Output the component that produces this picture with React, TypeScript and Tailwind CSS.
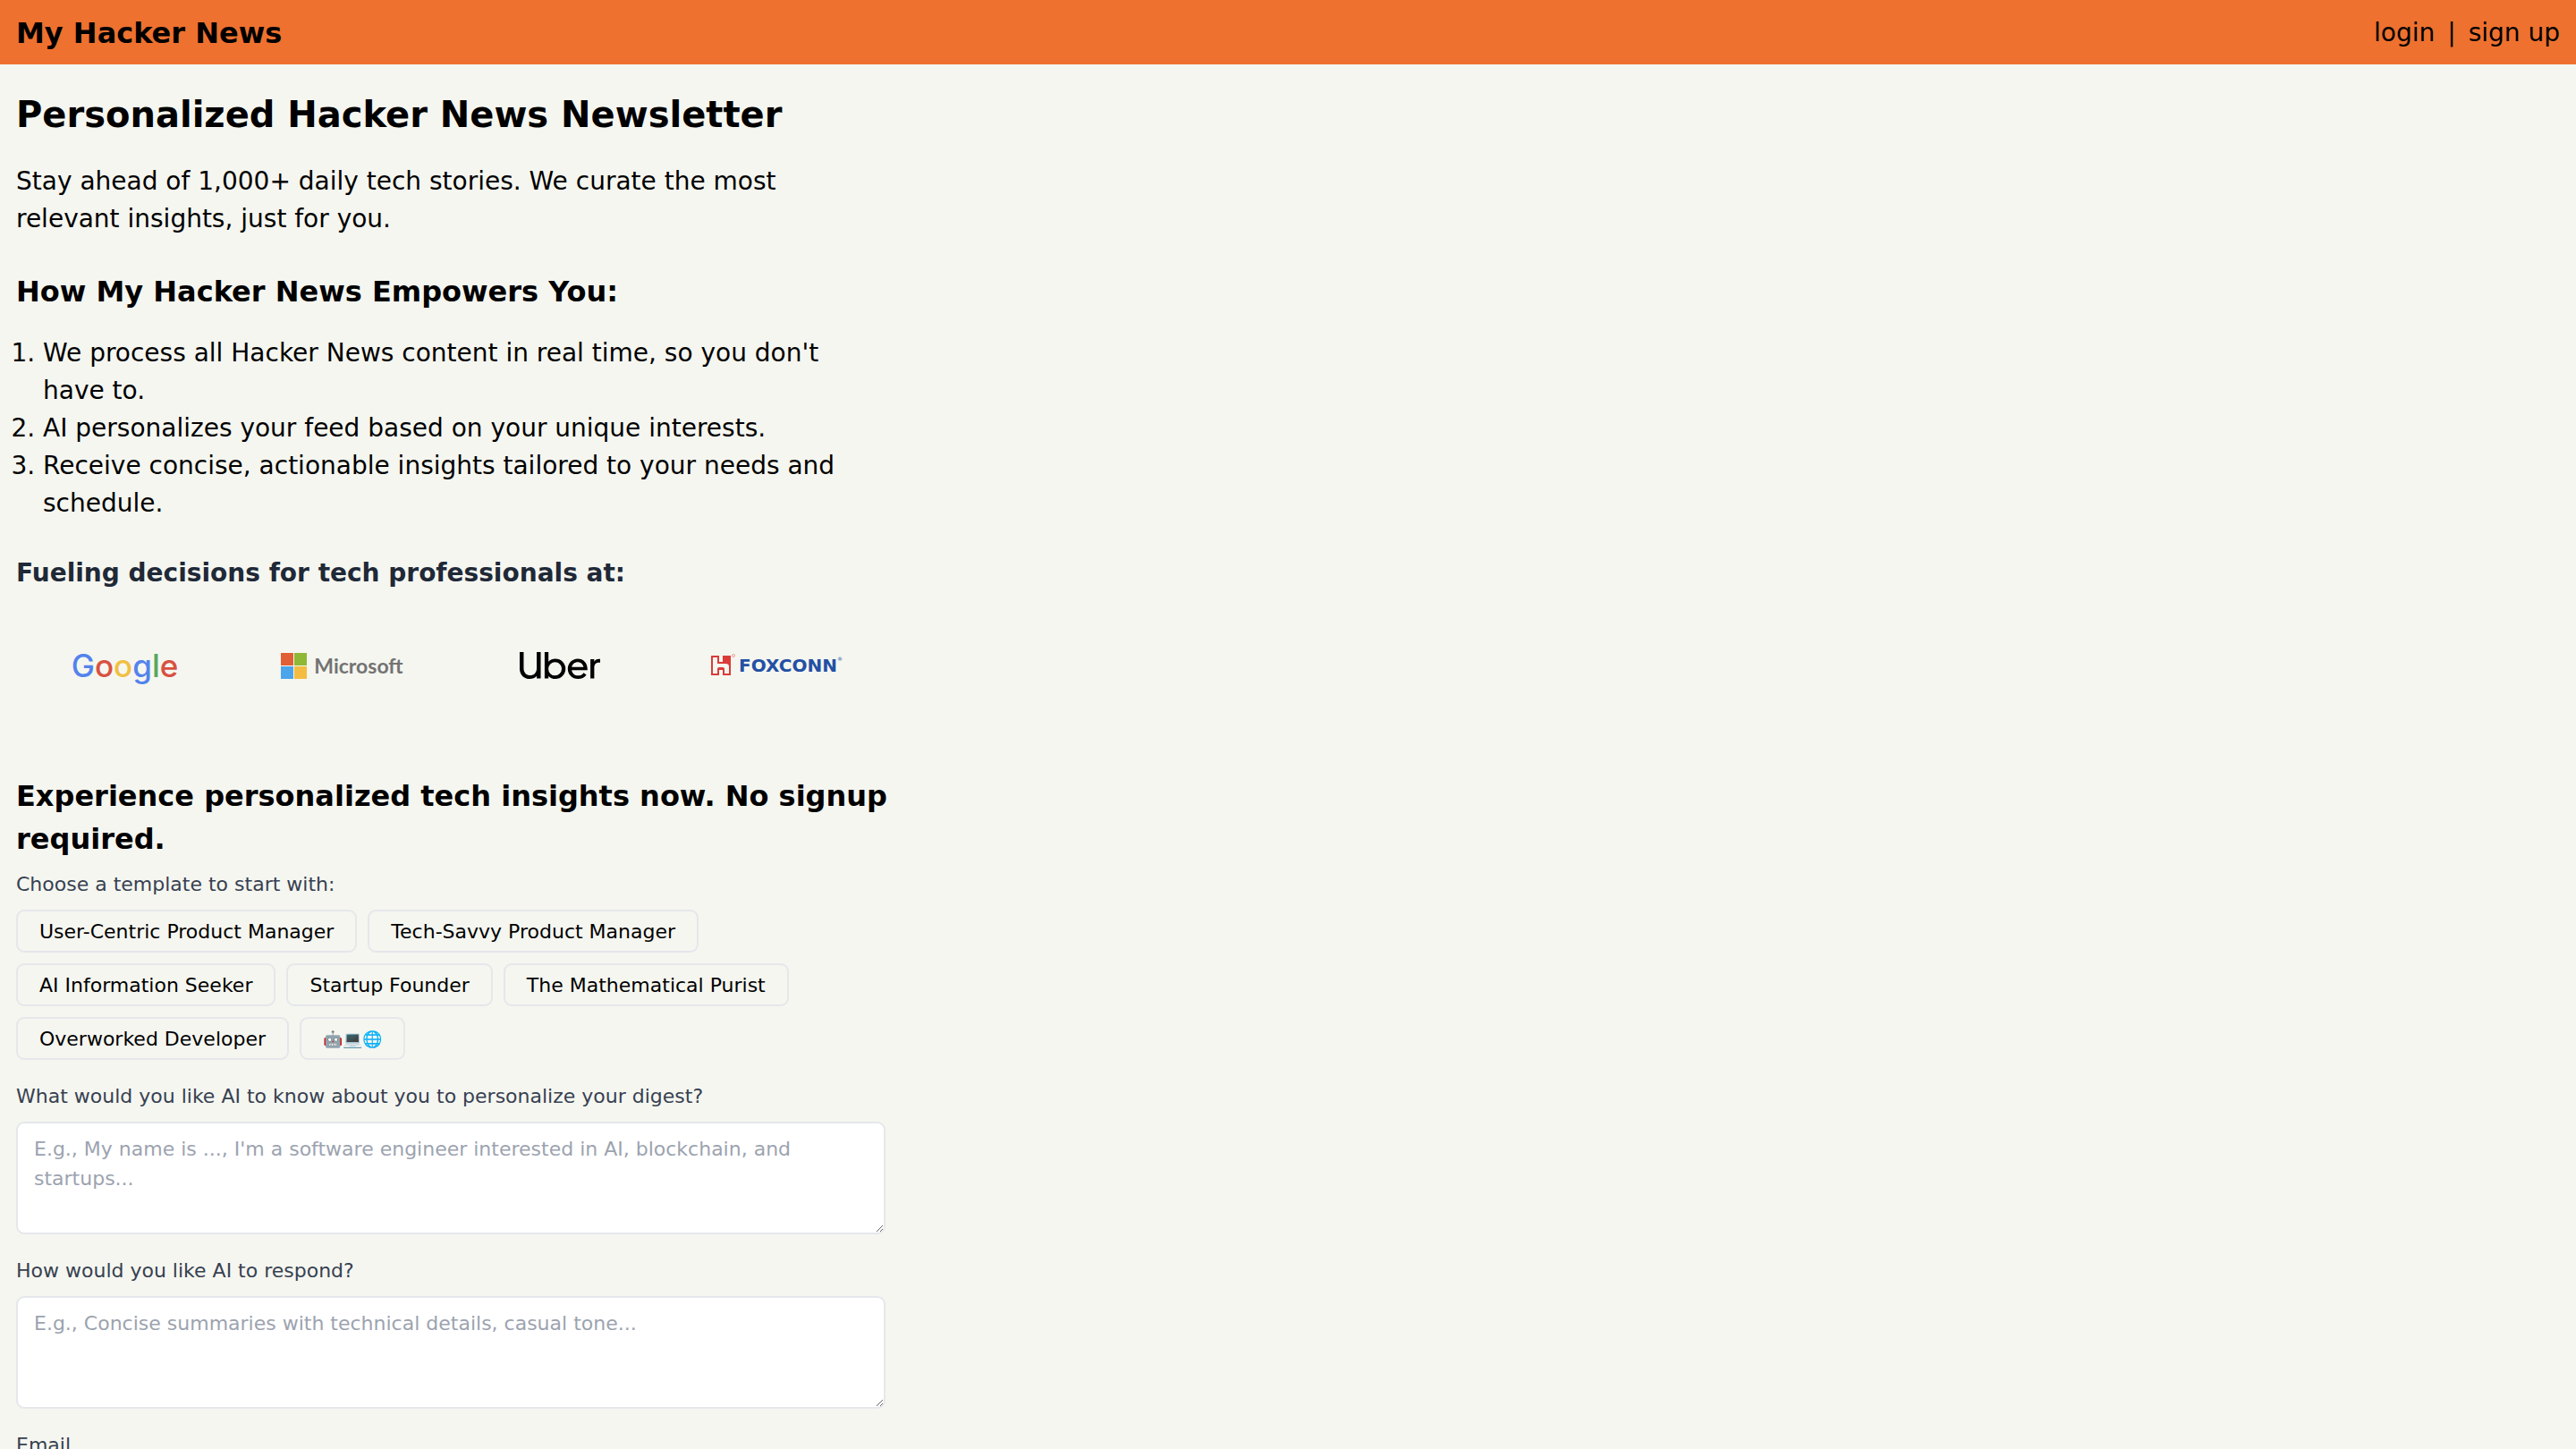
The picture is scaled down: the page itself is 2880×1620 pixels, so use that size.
import { useState } from 'react'
import { SiUber } from 'react-icons/si'

const BENEFITS = [
  "We process all Hacker News content in real time, so you don't have to.",
  'AI personalizes your feed based on your unique interests.',
  'Receive concise, actionable insights tailored to your needs and schedule.',
]

const TEMPLATES = [
  'User-Centric Product Manager',
  'Tech-Savvy Product Manager',
  'AI Information Seeker',
  'Startup Founder',
  'The Mathematical Purist',
  'Overworked Developer',
]

const EMOJI_TEMPLATE = '🤖💻🌐'

const CHIP = 'h-12 rounded-[9px] border-2 border-[#e5e7eb] px-6 leading-[33px]'
const FIELD =
  'block w-full h-[126px] rounded-[9px] border-2 border-[#e5e7eb] bg-white px-[18px] py-3 text-[22px] leading-[33px] text-black placeholder:text-[#9ca3af] resize'
const LABEL = 'block mb-3 text-[22px] leading-[33px] text-[#374151]'

function GoogleLogo() {
  return (
    <span className="font-[Inter,sans-serif] text-[35px] font-medium leading-none" aria-label="Google">
      <span className="text-[#5383ec]">G</span>
      <span className="text-[#d85140]">o</span>
      <span className="text-[#f1bf42]">o</span>
      <span className="text-[#5383ec]">g</span>
      <span className="text-[#58a65c]">l</span>
      <span className="text-[#d85140]">e</span>
    </span>
  )
}

function MicrosoftLogo() {
  return (
    <span className="flex items-center gap-2">
      <svg width="29" height="29" viewBox="0 0 29 29" aria-hidden="true">
        <rect width="14" height="14" fill="#e15f35" />
        <rect x="15" width="14" height="14" fill="#8fb836" />
        <rect y="15" width="14" height="14" fill="#4ca4ea" />
        <rect x="15" y="15" width="14" height="14" fill="#f4bc41" />
      </svg>
      <span className="font-[Lato,sans-serif] text-[23px] font-bold leading-none text-[#737373]">
        Microsoft
      </span>
    </span>
  )
}

function FoxconnLogo() {
  return (
    <span className="flex items-center gap-1">
      <svg width="27" height="26" viewBox="0 0 27 26" aria-hidden="true">
        <path d="M0 2H9V9H13V2H22V24H13V18H9V24H0Z" fill="#db3b39" />
        {/* the H is cut out of the red square, its right arm curves down from the bar */}
        <path
          d="M2 4H7V11H16Q20 11 20 14V22H15V17Q15 15 13 15H9Q7 15 7 17V22H2Z"
          fill="#f5f6f0"
        />
        <circle cx="25" cy="2" r="1.5" fill="none" stroke="#eba09c" strokeWidth="1" />
      </svg>
      <span className="flex items-start text-[#2350a4]">
        <span className="text-[20px] font-bold leading-none">FOXCONN</span>
        <span className="text-[6px] leading-none">®</span>
      </span>
    </span>
  )
}

export default function App() {
  const [about, setAbout] = useState('')
  const [style, setStyle] = useState('')
  const [email, setEmail] = useState('')

  return (
    <div className="h-screen overflow-hidden bg-[#f5f6f0] font-[Verdana,'DejaVu_Sans',sans-serif] text-[28px] leading-[42px] text-black">
      <header className="flex items-center justify-between bg-[#ee712f] px-[18px] pt-4 pb-3.5">
        <a href="#" className="text-[32px] font-bold">My Hacker News</a>
        <nav className="flex gap-3.5">
          <a href="#login">login</a>
          <span>|</span>
          <a href="#signup">sign up</a>
        </nav>
      </header>

      <main className="max-w-[1008px] px-[18px] pt-8">
        <h1 className="text-[40px] font-bold leading-[48px]">Personalized Hacker News Newsletter</h1>
        <p className="mt-[30px]">
          Stay ahead of 1,000+ daily tech stories. We curate the most relevant insights, just for you.
        </p>

        <h2 className="mt-9 text-[32px] font-bold leading-[48px]">How My Hacker News Empowers You:</h2>
        <ol className="mt-6 list-decimal pl-[30px]">
          {BENEFITS.map(item => <li key={item}>{item}</li>)}
        </ol>

        <h3 className="mt-9 font-bold text-[#1f2937]">Fueling decisions for tech professionals at:</h3>
        <div className="mt-5 grid h-[124px] grid-cols-4 place-items-center">
          <GoogleLogo />
          <MicrosoftLogo />
          <SiUber size={90} title="Uber" />
          <FoxconnLogo />
        </div>

        <h2 className="mt-[60px] whitespace-nowrap text-[32px] font-bold leading-[48px]">
          Experience personalized tech insights now. No signup<br />
          required.
        </h2>

        <form onSubmit={e => e.preventDefault()}>
          <p className="mt-2.5 text-[22px] leading-[33px] text-[#374151]">Choose a template to start with:</p>
          <div className="mt-3 flex flex-wrap gap-3 text-[22px]">
            {TEMPLATES.map(name => (
              <button key={name} type="button" onClick={() => setAbout(name)} className={CHIP}>
                {name}
              </button>
            ))}
            <button type="button" onClick={() => setAbout(EMOJI_TEMPLATE)} className={CHIP}>
              <span className="block text-[18px]">{EMOJI_TEMPLATE}</span>
            </button>
          </div>

          <div className="mt-6">
            <label htmlFor="about" className={LABEL}>
              What would you like AI to know about you to personalize your digest?
            </label>
            <textarea
              id="about"
              value={about}
              onChange={e => setAbout(e.target.value)}
              placeholder="E.g., My name is ..., I'm a software engineer interested in AI, blockchain, and startups..."
              className={FIELD}
            />
          </div>

          <div className="mt-6">
            <label htmlFor="style" className={LABEL}>How would you like AI to respond?</label>
            <textarea
              id="style"
              value={style}
              onChange={e => setStyle(e.target.value)}
              placeholder="E.g., Concise summaries with technical details, casual tone..."
              className={FIELD}
            />
          </div>

          <div className="mt-6">
            <label htmlFor="email" className={LABEL}>Email</label>
            <input
              id="email"
              type="email"
              value={email}
              onChange={e => setEmail(e.target.value)}
              className="block w-full rounded-[9px] border-2 border-[#e5e7eb] bg-white px-[18px] py-3 text-[22px] leading-[33px]"
            />
          </div>
        </form>
      </main>
    </div>
  )
}
